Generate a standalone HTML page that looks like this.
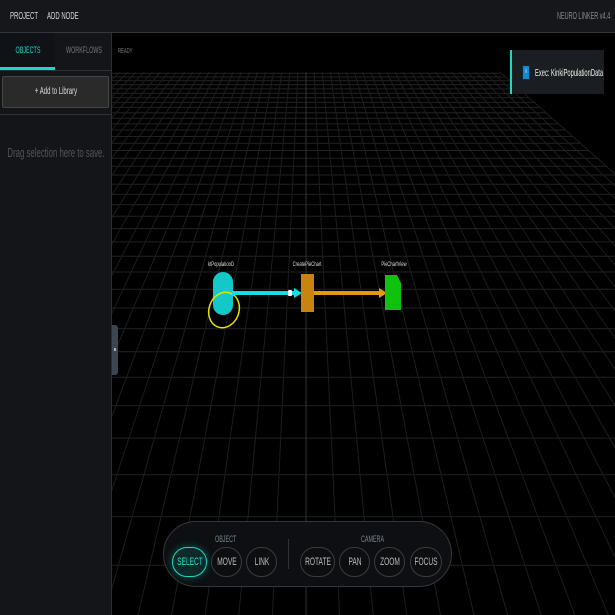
<!DOCTYPE html>
<html><head><meta charset="utf-8"><style>
*{margin:0;padding:0;box-sizing:border-box}
body{width:615px;height:615px;overflow:hidden;background:#000;font-family:"Liberation Sans",sans-serif;position:relative;color:#ccc;white-space:nowrap}
.c{display:inline-block;transform:scaleX(.6);transform-origin:0 0;white-space:nowrap}
.cc{position:absolute;left:50%;top:0;transform:scaleX(.6) translateX(-50%);transform-origin:0 0;white-space:nowrap}
.top{position:absolute;left:0;top:0;width:615px;height:33px;background:#15171b;border-bottom:1px solid #34363a}
.top span.p{position:absolute;top:11px;font-size:10px;color:#d8d8d8}
.side{position:absolute;left:0;top:33px;width:112px;height:582px;background:#131519;border-right:1px solid #2c2f33}
.tab{position:absolute;top:0;height:37px;font-size:9px;line-height:34px}
.abs{position:absolute}
.btn{position:absolute;top:547px;height:30px;border:1px solid #3a3d40;border-radius:15px;font-size:11px;color:#bbb;line-height:28px;background:#0c0e10}
</style></head><body>
<svg id="g" class="abs" style="left:0;top:0" width="615" height="615"></svg>
<div class="top"><span class="p" style="left:10px"><span class="c">PROJECT</span></span><span class="p" style="left:47px"><span class="c">ADD NODE</span></span><span class="p" style="left:557px;color:#8a8a8a;font-size:10px"><span class="c" style="transform:scaleX(.55)">NEURO LINKER v4.4</span></span></div>
<div class="side">
 <div class="tab" style="left:0;width:55px;background:#0f1317;color:#1fd6c0"><span class="cc">OBJECTS</span></div>
 <div class="abs" style="left:0;top:34px;width:55px;height:3px;background:#1fd6c0"></div>
 <div class="tab" style="left:55px;width:57px;color:#777"><span class="cc">WORKFLOWS</span></div>
 <div class="abs" style="left:0;top:37px;width:112px;height:1px;background:#2e3236"></div>
 <div class="abs" style="left:2px;top:43px;width:107px;height:32px;background:#2a2a2a;border:1px solid #454545;border-radius:2px;font-size:10px;color:#ddd;line-height:30px"><span class="cc">+ Add to Library</span></div>
 <div class="abs" style="left:0;top:81px;width:112px;height:1px;background:#2e3236"></div>
 <div class="abs" style="left:0;top:112px;width:112px;height:16px;font-size:13px;color:#555"><span class="cc">Drag selection here to save.</span></div>
</div>
<div class="abs" style="left:112px;top:325px;width:6px;height:50px;background:#3c4652;border-radius:0 3px 3px 0"></div>
<div class="abs" style="left:114px;top:348px;width:2px;height:3px;background:#aaa"></div>
<div class="abs" style="left:118px;top:48px;font-size:7px;color:#777"><span class="c">READY</span></div>
<div class="abs" style="left:510px;top:50px;width:94px;height:44px;background:#1a1e22;border-left:2px solid #1fd6c0"></div>
<div class="abs" style="left:522px;top:65px;width:8px;height:15px;background:#1688d0;border:1px solid #0a2a40;color:#fff;font-size:6px;text-align:center;line-height:13px">i</div>
<div class="abs" style="left:535px;top:67px;font-size:10.5px;color:#eee"><span class="c" style="transform:scaleX(.55)">Exec: KinkiPopulationData</span></div>
<svg class="abs" style="left:0;top:0" width="615" height="615">
 <g font-size="6" fill="#ddd" text-anchor="middle" font-family="Liberation Sans,sans-serif">
 <text x="0" y="266" transform="translate(221 0) scale(.7 1)">ktPopulationD</text>
 <text x="0" y="266" transform="translate(307 0) scale(.7 1)">CreatePieChart</text>
 <text x="0" y="266" transform="translate(394 0) scale(.7 1)">PieChartView</text></g>
 <rect x="213" y="272" width="20" height="43" rx="10" fill="#15c8c8"/>
 <ellipse cx="224" cy="310" rx="15" ry="18" transform="rotate(20 224 310)" fill="none" stroke="#e8e000" stroke-width="1.5"/>
 <rect x="232" y="291" width="62" height="4" fill="#10e0e0"/>
 <rect x="288" y="290" width="4" height="6" rx="1" fill="#fff"/>
 <polygon points="294,288 302,293 294,298" fill="#10e0e0"/>
 <rect x="313" y="291" width="68" height="4" fill="#e39a10"/>
 <polygon points="379,288 387,293 379,298" fill="#e39a10"/>
 <rect x="301" y="274" width="13" height="38" fill="#c98410"/>
 <polygon points="385,275 397,275 401,283 401,310 385,310" fill="#0ec20e"/>
</svg>
<div class="abs" style="left:163px;top:521px;width:289px;height:66px;background:#0d0f12;border:1px solid #34373a;border-radius:33px"></div>
<div class="abs" style="left:215px;top:534px;font-size:9px;color:#7a8690"><span class="c">OBJECT</span></div>
<div class="abs" style="left:361px;top:534px;font-size:9px;color:#7a8690"><span class="c">CAMERA</span></div>
<div class="abs" style="left:288px;top:539px;width:1px;height:30px;background:#333"></div>
<div class="btn" style="left:172px;width:35px;border-color:#1fd6c0;color:#1fe0c8;background:#0d2a28;box-shadow:0 0 8px #0b5a52"><span class="cc">SELECT</span></div>
<div class="btn" style="left:211px;width:31px"><span class="cc">MOVE</span></div>
<div class="btn" style="left:246px;width:31px"><span class="cc">LINK</span></div>
<div class="btn" style="left:300px;width:35px"><span class="cc">ROTATE</span></div>
<div class="btn" style="left:339px;width:31px"><span class="cc">PAN</span></div>
<div class="btn" style="left:374px;width:31px"><span class="cc">ZOOM</span></div>
<div class="btn" style="left:410px;width:32px"><span class="cc">FOCUS</span></div>
<script>
var s='',g=document.getElementById('g');
function X(k,y){return 306+k*0.047*(y+100);}
for(var i=-28;i<=8;i++){var y=1/(0.002451-0.0001185*i)-100;if(y>615)break;
 var x1=Math.max(112,X(-45,y)),x2=Math.min(615,X(24,y));
 s+='<line x1="'+x1+'" y1="'+y.toFixed(1)+'" x2="'+x2+'" y2="'+y.toFixed(1)+'" stroke="#222" stroke-width="1"/>';}
for(var k=-45;k<=24;k++){var a=X(k,72),b=X(k,615);
 s+='<line x1="'+a+'" y1="72" x2="'+b+'" y2="615" stroke="'+(k==0?'#333':'#1d1d1d')+'" stroke-width="1"/>';}
g.innerHTML='<defs><clipPath id="c"><rect x="112" y="33" width="503" height="582"/></clipPath></defs><g clip-path="url(#c)">'+s+'</g>';
</script>
</body></html>
